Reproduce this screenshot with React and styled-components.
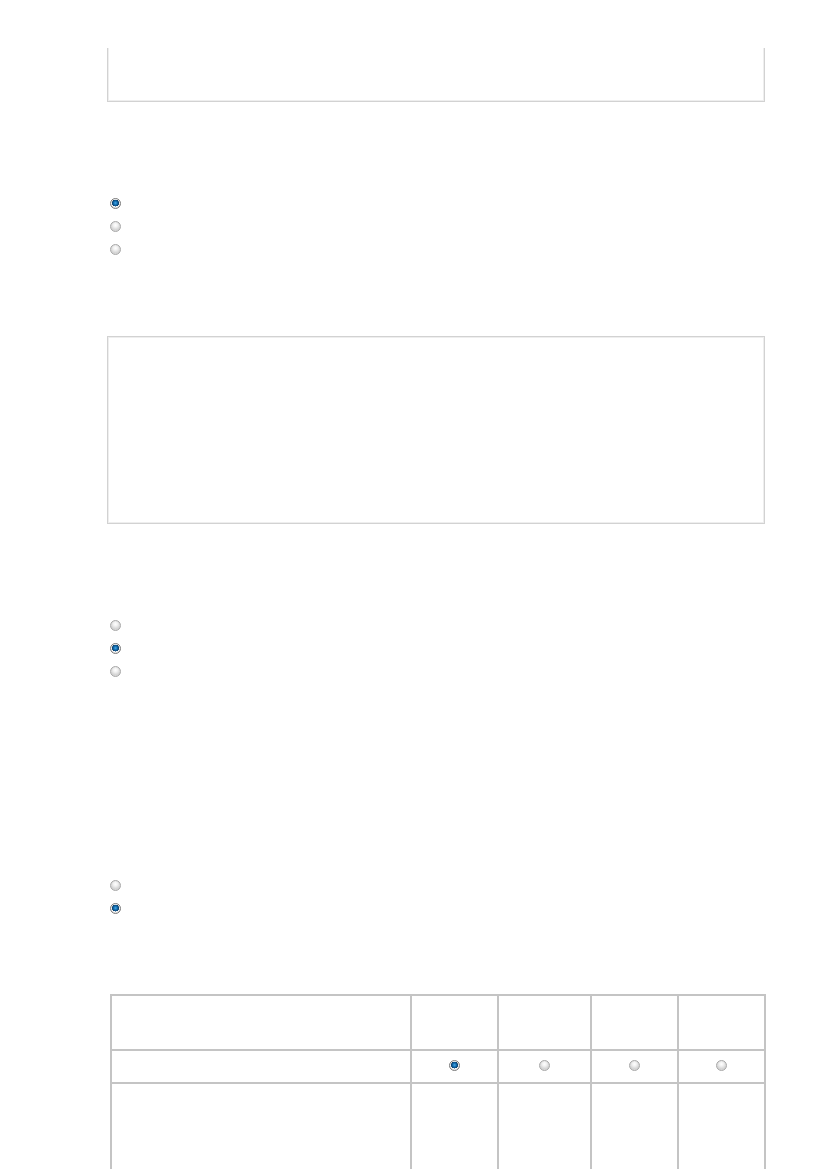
import React from "react";
import styled, { createGlobalStyle } from "styled-components";

const Global = createGlobalStyle`
  html, body { margin: 0; padding: 0; background: #ffffff; overflow: hidden; }
  body { font-family: "Liberation Sans", Arial, sans-serif; font-size: 13px; color: #333; }
`;

const Page = styled.div`
  width: 827px;
  padding-left: 107px;
  box-sizing: border-box;
  display: flex;
  flex-direction: column;
  align-items: flex-start;
`;

const Box = styled.div`
  flex-shrink: 0;
  width: 658px;
  height: ${(p) => p.$h}px;
  margin-top: ${(p) => p.$mt}px;
  box-sizing: border-box;
  border: 1px solid #d2d2d2;
  border-top: ${(p) => (p.$open ? "none" : "1px solid #d2d2d2")};
  box-shadow: inset 1px ${(p) => (p.$open ? 0 : 1)}px 0 #eeeeee, inset -1px -1px 0 #eeeeee;
  background: #fff;
`;

const RadioGroup = styled.div`
  flex-shrink: 0;
  margin-top: ${(p) => p.$mt}px;
  display: flex;
  flex-direction: column;
`;

const RadioRow = styled.label`
  height: 23px;
  display: flex;
  align-items: center;
  padding-left: 3px;
`;

const Radio = styled.span`
  display: inline-block;
  width: 11px;
  height: 11px;
  border-radius: 50%;
  box-sizing: border-box;
  border: 1px solid ${(p) => (p.$checked ? "#7a7a7a" : "#a8a8a8")};
  background: ${(p) =>
    p.$checked
      ? "radial-gradient(circle at 50% 45%, #4aa8e6 0, #1474b8 1.6px, #0b4f86 2.8px, #0a3c66 3.3px, #ffffff 3.6px, #e6e6e6 4.5px)"
      : "radial-gradient(circle at 50% 35%, #ffffff 0, #f2f2f2 2px, #d6d6d6 4.5px)"};
`;

const Table = styled.table`
  flex-shrink: 0;
  margin-top: 74px;
  margin-left: 3px;
  width: 655px;
  border-collapse: separate;
  border-spacing: 0;
  border: 1px solid #c4c4c4;
  table-layout: fixed;
`;

const Cell = styled.td`
  border: 1px solid #c4c4c4;
  height: ${(p) => p.$h}px;
  padding: 0;
  text-align: center;
  vertical-align: middle;
  box-sizing: border-box;
`;

const cols = [300, 87, 93, 87, 87];

export default function App() {
  return (
    <>
      <Global />
      <Page>
        <Box $mt={48} $h={54} $open />

        <RadioGroup $mt={90}>
          <RadioRow><Radio $checked /></RadioRow>
          <RadioRow><Radio /></RadioRow>
          <RadioRow><Radio /></RadioRow>
        </RadioGroup>

        <Box $mt={75} $h={188} />

        <RadioGroup $mt={90}>
          <RadioRow><Radio /></RadioRow>
          <RadioRow><Radio $checked /></RadioRow>
          <RadioRow><Radio /></RadioRow>
        </RadioGroup>

        <RadioGroup $mt={191}>
          <RadioRow><Radio /></RadioRow>
          <RadioRow><Radio $checked /></RadioRow>
        </RadioGroup>

        <Table>
          <colgroup>
            {cols.map((w, i) => (
              <col key={i} style={{ width: w }} />
            ))}
          </colgroup>
          <tbody>
            <tr>
              {cols.map((_, i) => (
                <Cell key={i} $h={55} />
              ))}
            </tr>
            <tr>
              <Cell $h={33} />
              <Cell $h={33}><Radio $checked /></Cell>
              <Cell $h={33}><Radio /></Cell>
              <Cell $h={33}><Radio /></Cell>
              <Cell $h={33}><Radio /></Cell>
            </tr>
            <tr>
              {cols.map((_, i) => (
                <Cell key={i} $h={120} />
              ))}
            </tr>
          </tbody>
        </Table>
      </Page>
    </>
  );
}
